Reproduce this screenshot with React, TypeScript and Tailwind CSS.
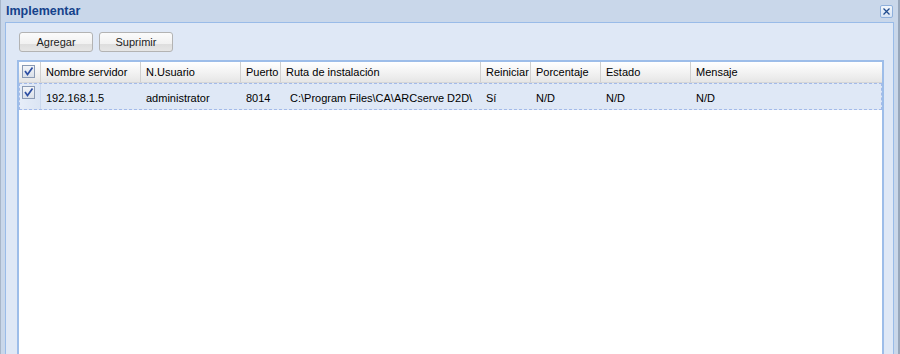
import React from "react";

const font = { fontFamily: '"Liberation Sans", Arial, sans-serif' };

function CheckBox() {
  return (
    <svg width="13" height="13" viewBox="0 0 13 13" className="block">
      <defs>
        <linearGradient id="cbg" x1="0" y1="0" x2="0" y2="1">
          <stop offset="0" stopColor="#f4f6f9" />
          <stop offset="1" stopColor="#d9dfe8" />
        </linearGradient>
      </defs>
      <rect x="0.5" y="0.5" width="12" height="12" fill="url(#cbg)" stroke="#8a9ab4" />
      <polyline points="3,6 5.5,9.5 10.5,2.5" fill="none" stroke="#2e4fa3" strokeWidth="1.7" />
    </svg>
  );
}

function CloseBtn() {
  return (
    <svg width="13" height="13" viewBox="0 0 13 13" className="block">
      <defs>
        <linearGradient id="clg" x1="0" y1="0" x2="0" y2="1">
          <stop offset="0" stopColor="#f3f7fc" />
          <stop offset="1" stopColor="#d6e3f4" />
        </linearGradient>
      </defs>
      <rect x="0.5" y="0.5" width="12" height="12" rx="1.5" fill="url(#clg)" stroke="#8fb0dc" />
      <path d="M3.5 3.5 L9.5 9.5 M9.5 3.5 L3.5 9.5" stroke="#1f4b8e" strokeWidth="1.3" />
    </svg>
  );
}

const columns = [
  { label: "Nombre servidor", w: "w-[100px]", value: "192.168.1.5", cellPad: "pl-[5px]" },
  { label: "N.Usuario", w: "w-[100px]", value: "administrator", cellPad: "pl-[5px]" },
  { label: "Puerto", w: "w-[40px]", value: "8014", cellPad: "pl-[5px]" },
  { label: "Ruta de instalación", w: "w-[200px]", value: "C:\\Program Files\\CA\\ARCserve D2D\\", cellPad: "pl-[9px]" },
  { label: "Reiniciar", w: "w-[50px]", value: "Sí", cellPad: "pl-[5px]" },
  { label: "Porcentaje", w: "w-[70px]", value: "N/D", cellPad: "pl-[5px]" },
  { label: "Estado", w: "w-[90px]", value: "N/D", cellPad: "pl-[5px]" },
  { label: "Mensaje", w: "flex-1", value: "N/D", cellPad: "pl-[5px]" },
];

function ToolButton({ label }: { label: string }) {
  return (
    <button className="h-[20px] w-[74px] rounded-[3px] border border-[#b3b3b3] bg-[linear-gradient(to_bottom,#fbfbfb_0%,#f1f1f1_62%,#dedede_63%,#e6e6e6_100%)] text-[11px] text-[#222] leading-none">
      {label}
    </button>
  );
}

export default function App() {
  return (
    <div
      style={font}
      className="flex h-[354px] w-[900px] flex-col overflow-hidden border-l border-r-2 border-l-[#a8b6c9] border-r-[#98a7bb] bg-[#c9d7ea]"
    >
      <div className="flex h-[22px] items-center justify-between pl-[5px] pr-[5px]">
        <span className="text-[12.5px] font-bold text-[#15428b]">Implementar</span>
        <CloseBtn />
      </div>
      <div className="mx-[4px] flex flex-1 flex-col border border-b-0 border-[#99bbe8] bg-[#dfe8f6] pl-[11px] pr-[9px] pt-[9px]">
        <div className="flex gap-[6px] pl-[2px]">
          <ToolButton label="Agregar" />
          <ToolButton label="Suprimir" />
        </div>
        <div className="mt-[8px] flex flex-1 flex-col border-2 border-b-0 border-[#9dbde9] bg-white text-[11px] text-black">
          <div className="flex h-[21px] bg-[linear-gradient(to_bottom,#ffffff_0%,#f3f3f3_50%,#e6e6e6_100%)] border-b border-[#d6d6d6]">
            <div className="w-[22px] border-r border-[#d0d0d0] pl-[3px] pt-[3px]">
              <CheckBox />
            </div>
            {columns.map((c, i) => (
              <div
                key={c.label}
                className={`${c.w} flex items-center overflow-hidden pl-[5px] whitespace-nowrap ${i < columns.length - 1 ? "border-r border-[#d0d0d0]" : ""}`}
              >
                {c.label}
              </div>
            ))}
          </div>
          <div className="flex h-[27px] border border-dashed border-[#a3bae9] bg-[#dfe8f6]">
            <div className="w-[21px] border-r border-[#cad8ee] bg-[linear-gradient(to_right,#e6edf8,#dbe5f4)] pl-[2px] pt-[2px]">
              <CheckBox />
            </div>
            {columns.map((c) => (
              <div key={c.label} className={`${c.w} flex items-center pt-[4px] whitespace-nowrap ${c.cellPad}`}>
                {c.value}
              </div>
            ))}
          </div>
        </div>
      </div>
    </div>
  );
}
